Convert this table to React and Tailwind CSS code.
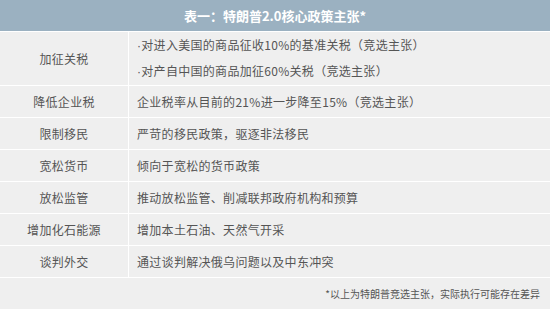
export default function App() {
  const rows = [
    { k: '降低企业税', v: '企业税率从目前的21%进一步降至15%（竞选主张）' },
    { k: '限制移民', v: '严苛的移民政策，驱逐非法移民' },
    { k: '宽松货币', v: '倾向于宽松的货币政策' },
    { k: '放松监管', v: '推动放松监管、削减联邦政府机构和预算' },
    { k: '增加化石能源', v: '增加本土石油、天然气开采' },
    { k: '谈判外交', v: '通过谈判解决俄乌问题以及中东冲突' },
  ]
  const font = { fontFamily: '"Noto Sans CJK SC", "Liberation Sans", sans-serif' }
  const dot = <span style={{ fontFamily: '"Liberation Sans", sans-serif' }}>·</span>

  return (
    <div className="w-[550px] h-[309px] bg-[#efefef] flex flex-col overflow-hidden" style={font}>
      <div className="h-[32px] bg-[#9bb1c1] flex items-center justify-center text-white font-bold text-[13px] border-b border-white">
        表一：特朗普2.0核心政策主张*
      </div>
      <div className="flex h-[54px] border-b border-white">
        <div className="w-[129px] flex items-center justify-center text-[12px] text-[#555] tracking-[0.3px] border-r border-white">加征关税</div>
        <div className="flex-1 flex flex-col justify-center gap-[7px] pl-[8px] text-[12px] text-[#555] tracking-[0.3px]">
          <div>{dot}对进入美国的商品征收10%的基准关税（竞选主张）</div>
          <div>{dot}对产自中国的商品加征60%关税（竞选主张）</div>
        </div>
      </div>
      {rows.map((r) => (
        <div key={r.k} className="flex h-[32px] border-b border-white">
          <div className="w-[129px] flex items-center justify-center text-[12px] text-[#555] tracking-[0.3px] border-r border-white">{r.k}</div>
          <div className="flex-1 flex items-center pl-[8px] text-[12px] text-[#555] tracking-[0.3px]">{r.v}</div>
        </div>
      ))}
      <div className="flex-1 flex items-center justify-end pr-[10px] text-[10px] text-[#555]">
        *以上为特朗普竞选主张，实际执行可能存在差异
      </div>
    </div>
  )
}
